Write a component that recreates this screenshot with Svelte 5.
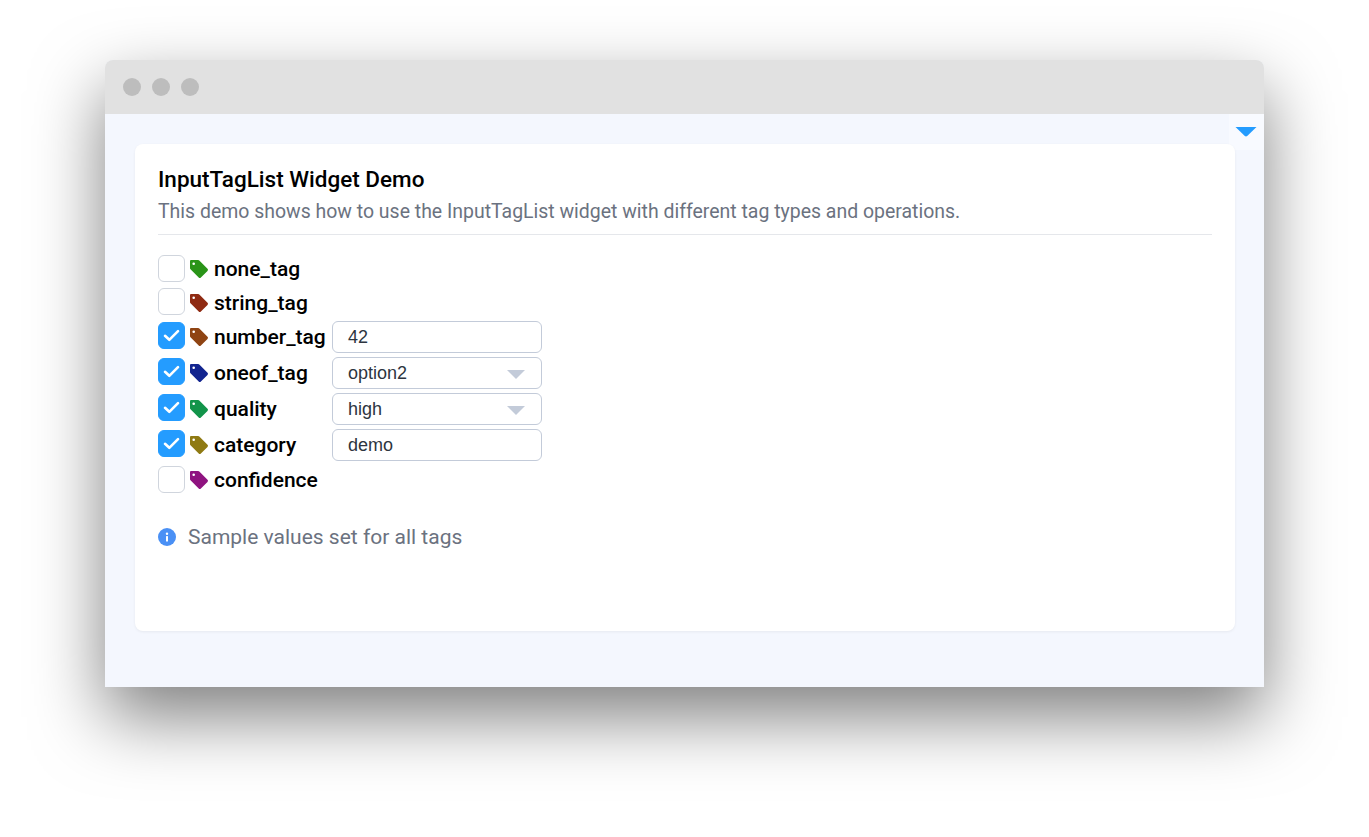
<script>
	const tags = [
		{ name: 'none_tag', color: '#2a9418', checked: false },
		{ name: 'string_tag', color: '#8f2a12', checked: false },
		{ name: 'number_tag', color: '#8f4413', checked: true, kind: 'input', value: '42' },
		{ name: 'oneof_tag', color: '#12248f', checked: true, kind: 'select', value: 'option2' },
		{ name: 'quality', color: '#12944a', checked: true, kind: 'select', value: 'high' },
		{ name: 'category', color: '#8f7a13', checked: true, kind: 'input', value: 'demo' },
		{ name: 'confidence', color: '#8f1380', checked: false }
	];
</script>

<div class="page">
	<div class="window">
		<div class="titlebar">
			<span class="dot"></span>
			<span class="dot"></span>
			<span class="dot"></span>
		</div>
		<div class="content">
			<div class="collapse">
				<svg width="22" height="11" viewBox="0 0 22 11"><path d="M.5 1h21L12.200 10a2 2 0 0 1-2.400 0z" fill="#249cff" /></svg>
			</div>
			<div class="card">
				<h1>InputTagList Widget Demo</h1>
				<p class="desc">This demo shows how to use the InputTagList widget with different tag types and operations.</p>
				<div class="list">
					{#each tags as tag}
						<div class="row" class:tall={tag.kind}>
							<span class="check" class:on={tag.checked}>
								{#if tag.checked}
									<svg width="17" height="13" viewBox="0 0 17 13"><path d="M2 6.800l4.300 4L15 2.200" fill="none" stroke="#fff" stroke-width="2.600" stroke-linecap="round" stroke-linejoin="round" /></svg>
								{/if}
							</span>
							<svg class="tag" width="20" height="20" viewBox="0 0 20 20">
								<path fill-rule="evenodd" fill={tag.color} d="M2 1h7.200a1.600 1.600 0 0 1 1.100.5l8.200 8.200a1.600 1.600 0 0 1 0 2.200l-6.600 6.600a1.600 1.600 0 0 1-2.200 0L1.500 10.300A1.600 1.600 0 0 1 1 9.200V2a1 1 0 0 1 1-1zM4.700 3.400a1.300 1.300 0 1 0 0 2.600 1.300 1.300 0 0 0 0-2.600z" />
							</svg>
							<span class="name">{tag.name}</span>
							{#if tag.kind}
								<div class="field">
									<span>{tag.value}</span>
									{#if tag.kind === 'select'}
										<svg class="caret" width="18" height="9" viewBox="0 0 18 9"><path d="M0 0h18l-9 9z" fill="#c3cbd9" /></svg>
									{/if}
								</div>
							{/if}
						</div>
					{/each}
				</div>
				<div class="note">
					<svg width="18" height="18" viewBox="0 0 18 18">
						<circle cx="9" cy="9" r="9" fill="#4a90f5" />
						<rect x="8" y="8" width="2" height="5.500" rx=".5" fill="#fff" />
						<circle cx="9" cy="5.800" r="1.200" fill="#fff" />
					</svg>
					<span>Sample values set for all tags</span>
				</div>
			</div>
		</div>
	</div>
</div>

<style>
	:global(body) {
		margin: 0;
		background: #fff;
	}
	.page {
		width: 1369px;
		height: 837px;
		padding: 60px 0 0 105px;
		box-sizing: border-box;
		overflow: hidden;
		font-family: Roboto, sans-serif;
	}
	.window {
		width: 1159px;
		height: 627px;
		border-radius: 8px 8px 0 0;
		background: #f4f7fe;
		box-shadow: 0 30px 70px rgba(0, 0, 0, 0.5);
		display: flex;
		flex-direction: column;
	}
	.titlebar {
		height: 54px;
		flex: none;
		background: #e1e1e1;
		border-radius: 8px 8px 0 0;
		display: flex;
		align-items: center;
		gap: 11px;
		padding-left: 18px;
		box-sizing: border-box;
	}
	.dot {
		width: 18px;
		height: 18px;
		border-radius: 50%;
		background: #bdbdbd;
	}
	.content {
		position: relative;
		flex: 1;
		padding: 30px 29px 56px 30px;
		box-sizing: border-box;
		display: flex;
	}
	.collapse {
		position: absolute;
		right: 0;
		top: 0;
		width: 35px;
		height: 36px;
		background: #f8faff;
		border-radius: 0 0 0 4px;
		display: flex;
		align-items: center;
		justify-content: center;
		padding: 0 2px 1px 0;
		box-sizing: border-box;
	}
	.card {
		position: relative;
		flex: 1;
		background: #fff;
		border-radius: 8px;
		box-shadow: 0 1px 3px rgba(0, 0, 0, 0.06);
		padding: 21px 23px 0;
		box-sizing: border-box;
	}
	h1 {
		margin: 0;
		font-size: 22.500px;
		line-height: 28px;
		font-weight: 500;
		color: #000;
	}
	.desc {
		margin: 7px 0 0;
		padding-bottom: 10px;
		border-bottom: 1px solid #e5e7eb;
		font-size: 19.470px;
		line-height: 24px;
		color: #6b7280;
	}
	.list {
		margin-top: 17px;
		display: flex;
		flex-direction: column;
	}
	.row {
		display: flex;
		align-items: center;
		height: 33.500px;
		padding-top: 1px;
		box-sizing: border-box;
	}
	.row.tall {
		height: 36px;
		padding-top: 0;
	}
	.check {
		width: 27px;
		height: 27px;
		flex: none;
		margin-top: -2px;
		box-sizing: border-box;
		border: 1px solid #d0d5dd;
		border-radius: 6px;
		background: #fff;
		display: flex;
		align-items: center;
		justify-content: center;
	}
	.tall .check {
		margin-top: -3px;
	}
	.check.on {
		background: #249cff;
		border-color: #249cff;
	}
	.tag {
		margin-left: 4px;
		flex: none;
	}
	.name {
		margin-left: 5px;
		width: 118px;
		flex: none;
		font-size: 21px;
		font-weight: 500;
		color: #000;
	}
	.field {
		width: 210px;
		height: 32px;
		box-sizing: border-box;
		border: 1px solid #c3cbd9;
		border-radius: 6px;
		background: #fff;
		display: flex;
		align-items: center;
		justify-content: space-between;
		padding: 1px 16px 0 15px;
		font-family: 'Liberation Sans', Arial, sans-serif;
		font-size: 18px;
		color: #2d3540;
	}
	.caret {
		margin-top: 1px;
	}
	.note {
		margin-top: 28.500px;
		display: flex;
		align-items: center;
		gap: 12px;
		font-size: 21px;
		color: #6b7280;
	}
</style>
